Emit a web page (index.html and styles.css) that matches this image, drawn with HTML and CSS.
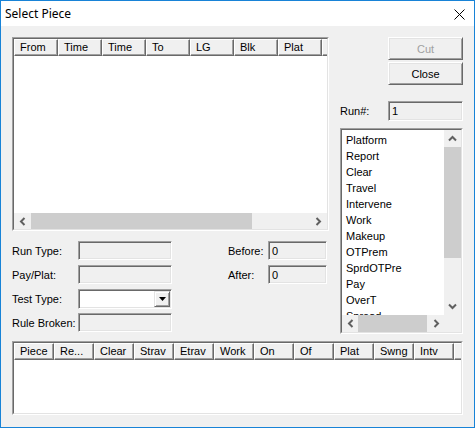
FILE: index.html
```html
<!DOCTYPE html>
<html>
<head>
<meta charset="utf-8">
<link rel="stylesheet" href="styles.css">
</head>
<body>
<div class="window">
  <div class="titlebar">
    <span class="title">Select Piece</span>
    <svg class="close" width="11" height="11" viewBox="0 0 11 11"><path d="M0.5 0.5 L10.5 10.5 M10.5 0.5 L0.5 10.5" stroke="#000" stroke-width="1" fill="none"/></svg>
  </div>
  <div class="content">
    <div class="upper">
      <div class="leftcol">
        <div class="lv lv-top edge"><div class="in">
          <div class="header">
            <div class="hd">From</div><div class="hd">Time</div><div class="hd">Time</div><div class="hd">To</div><div class="hd">LG</div><div class="hd">Blk</div><div class="hd">Plat</div><div class="hd"></div>
          </div>
          <div class="lv-body"></div>
          <div class="hscroll">
            <div class="arrow"><svg width="7" height="9" viewBox="0 0 7 9"><path d="M5.5 1 L2 4.5 L5.5 8" stroke="#606060" stroke-width="2" fill="none"/></svg></div>
            <div class="thumb t-top"></div>
            <div class="spacer"></div>
            <div class="arrow"><svg width="7" height="9" viewBox="0 0 7 9"><path d="M1.5 1 L5 4.5 L1.5 8" stroke="#606060" stroke-width="2" fill="none"/></svg></div>
          </div>
        </div></div>
        <div class="form">
          <div class="lbl">Run Type:</div><div class="field"></div><div></div><div class="lbl">Before:</div><div class="field">0</div>
          <div class="lbl">Pay/Plat:</div><div class="field"></div><div></div><div class="lbl">After:</div><div class="field">0</div>
          <div class="lbl">Test Type:</div>
          <div class="combo"><div class="dd"><svg width="7" height="4" viewBox="0 0 7 4"><path d="M0 0 H7 L3.5 4 Z" fill="#000"/></svg></div></div>
          <div></div><div></div><div></div>
          <div class="lbl">Rule Broken:</div><div class="field"></div><div></div><div></div><div></div>
        </div>
      </div>
      <div class="rightcol">
        <div class="btn disabled">Cut</div>
        <div class="btn btn-close">Close</div>
        <div class="runrow"><span class="lbl">Run#:</span><div class="field run">1</div></div>
        <div class="listbox edge"><div class="in">
          <div class="items">
            <div class="item">Platform</div>
            <div class="item">Report</div>
            <div class="item">Clear</div>
            <div class="item">Travel</div>
            <div class="item">Intervene</div>
            <div class="item">Work</div>
            <div class="item">Makeup</div>
            <div class="item">OTPrem</div>
            <div class="item">SprdOTPre</div>
            <div class="item">Pay</div>
            <div class="item">OverT</div>
            <div class="item">Spread</div>
          </div>
          <div class="vscroll">
            <div class="varrow"><svg width="9" height="7" viewBox="0 0 9 7"><path d="M1 5.5 L4.5 2 L8 5.5" stroke="#606060" stroke-width="2" fill="none"/></svg></div>
            <div class="thumb t-v"></div>
            <div class="spacer"></div>
            <div class="varrow"><svg width="9" height="7" viewBox="0 0 9 7"><path d="M1 1.5 L4.5 5 L8 1.5" stroke="#606060" stroke-width="2" fill="none"/></svg></div>
          </div>
          <div class="hscroll lb-h">
            <div class="arrow a16"><svg width="7" height="9" viewBox="0 0 7 9"><path d="M5.5 1 L2 4.5 L5.5 8" stroke="#606060" stroke-width="2" fill="none"/></svg></div>
            <div class="thumb t-lb"></div>
            <div class="spacer"></div>
            <div class="arrow a16"><svg width="7" height="9" viewBox="0 0 7 9"><path d="M1.5 1 L5 4.5 L1.5 8" stroke="#606060" stroke-width="2" fill="none"/></svg></div>
          </div>
          <div class="corner"></div>
        </div></div>
      </div>
    </div>
    <div class="lv lv-bottom edge"><div class="in">
      <div class="header">
        <div class="hd">Piece</div><div class="hd">Re...</div><div class="hd">Clear</div><div class="hd">Strav</div><div class="hd">Etrav</div><div class="hd">Work</div><div class="hd">On</div><div class="hd">Of</div><div class="hd">Plat</div><div class="hd">Swng</div><div class="hd">Intv</div><div class="hd"></div>
      </div>
      <div class="lv-body"></div>
    </div></div>
  </div>
</div>
</body>
</html>
```

FILE: styles.css
```css
* { box-sizing: border-box; margin: 0; padding: 0; }
body {
  margin: 0;
  background: #fff;
  font-family: "Liberation Sans", Arial, sans-serif;
  font-size: 11px;
  color: #000;
}
.window {
  width: 475px;
  height: 428px;
  border: 1px solid #1883d7;
  background: #f0f0f0;
  display: flex;
  flex-direction: column;
}
.titlebar {
  height: 25px;
  flex: none;
  background: #fff;
  display: flex;
  align-items: center;
  padding-left: 4px;
}
.title {
  font-family: "Noto Sans", "Open Sans", sans-serif;
  font-size: 12px;
  color: #000;
}
.close { margin-left: auto; margin-right: 9px; margin-top: 1px; }
.content { padding: 11px 0 0 11px; }
.upper { display: flex; gap: 11px; }
.leftcol { width: 317px; }
.rightcol { width: 123px; display: flex; flex-direction: column; }

.edge {
  border: 1px solid;
  border-color: #a0a0a0 #fff #fff #a0a0a0;
}
.edge > .in {
  border: 1px solid;
  border-color: #696969 #e3e3e3 #e3e3e3 #696969;
  height: 100%;
  background: #fff;
  overflow: hidden;
}
.lv .in { display: flex; flex-direction: column; }
.lv-top { height: 194px; }
.lv-bottom { width: 451px; height: 74px; margin-top: 7px; }

.header { display: flex; height: 17px; flex: none; background: #f0f0f0; overflow: hidden; }
.hd {
  flex: none;
  width: 44px;
  height: 17px;
  border-top: 1px solid #fff;
  border-left: 1px solid #fff;
  border-right: 1px solid #696969;
  border-bottom: 1px solid #696969;
  box-shadow: inset -1px -1px #a0a0a0;
  padding-left: 5px;
  line-height: 15px;
  white-space: nowrap;
  overflow: hidden;
}
.lv-bottom .hd { width: 40px; }
.lv-body { flex: 1; background: #fff; }

.hscroll { height: 16px; flex: none; background: #f0f0f0; display: flex; }
.arrow { width: 17px; flex: none; display: flex; align-items: center; justify-content: center; }
.a16 { width: 16px; }
.spacer { flex: 1; }
.thumb { background: #cdcdcd; flex: none; }
.t-top { width: 221px; }
.t-lb { width: 69px; }

.form {
  margin-top: 10px;
  display: grid;
  grid-template-columns: 66px 94px 56px 40px 59px;
  grid-auto-rows: 19px;
  row-gap: 5px;
}
.lbl { display: flex; align-items: center; white-space: nowrap; }
.field {
  background: #f0f0f0;
  border: 1px solid;
  border-color: #a0a0a0 #fff #fff #a0a0a0;
  box-shadow: inset 1px 1px #696969, inset -1px -1px #e3e3e3;
  padding-left: 3px;
  display: flex;
  align-items: center;
}
.combo {
  height: 20px;
  background: #fff;
  border: 1px solid;
  border-color: #a0a0a0 #fff #fff #a0a0a0;
  box-shadow: inset 1px 1px #696969, inset -1px -1px #e3e3e3;
  padding: 1px;
  display: flex;
  justify-content: flex-end;
}
.dd {
  width: 16px;
  height: 100%;
  background: #f0f0f0;
  border: 1px solid;
  border-color: #e3e3e3 #696969 #696969 #e3e3e3;
  box-shadow: inset 1px 1px #fff, inset -1px -1px #a0a0a0;
  display: flex;
  align-items: center;
  justify-content: center;
}

.btn {
  margin-left: 48px;
  width: 75px;
  height: 23px;
  background: #f0f0f0;
  border: 1px solid;
  border-color: #fff #696969 #696969 #fff;
  box-shadow: inset 1px 1px #e3e3e3, inset -1px -1px #a0a0a0;
  display: flex;
  align-items: center;
  justify-content: center;
}
.btn.disabled { color: #a0a0a0; }
.btn-close { margin-top: 2px; }

.runrow { margin-top: 16px; display: flex; align-items: center; height: 20px; }
.runrow .lbl { width: 48px; height: 20px; }
.field.run { width: 75px; height: 20px; }

.listbox { margin-top: 7px; height: 206px; }
.listbox .in {
  display: grid;
  grid-template-columns: 1fr 17px;
  grid-template-rows: 1fr 17px;
}
.items { overflow: hidden; padding: 2px 0 0 4px; }
.item { height: 16px; line-height: 16px; white-space: nowrap; }
.vscroll { background: #f0f0f0; display: flex; flex-direction: column; }
.varrow { height: 17px; flex: none; display: flex; align-items: center; justify-content: center; }
.t-v { height: 111px; }
.lb-h { height: 17px; }
.corner { background: #f0f0f0; }
```
